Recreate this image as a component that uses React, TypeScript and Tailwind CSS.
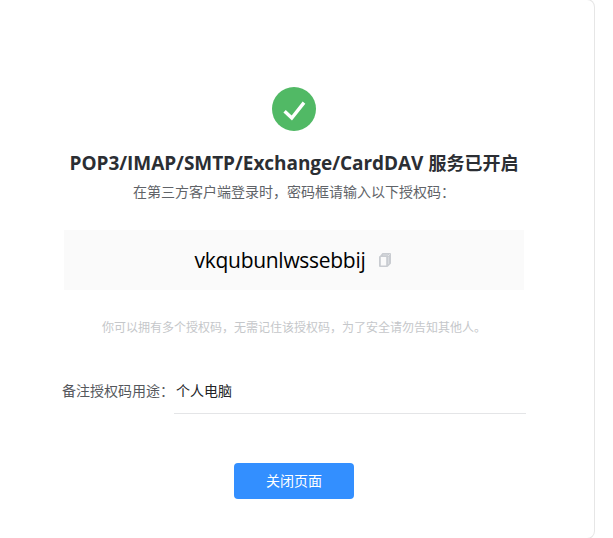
const CJK = "font-['Noto_Sans_CJK_SC',sans-serif]";

function SuccessIcon() {
  return (
    <svg width="44" height="44" viewBox="0 0 44 44" className="block">
      <circle cx="22" cy="22" r="22" fill="#51b965" />
      <path d="M12.6 24.2 L19.8 31 L32 15.6" fill="none" stroke="#fff" strokeWidth="3.4" />
    </svg>
  );
}

function CopyIcon() {
  return (
    <svg width="12" height="14" viewBox="0 0 12 14" className="block">
      <path
        fill="#c9ccd1"
        fillRule="evenodd"
        d="M3.5 0H11a1 1 0 0 1 1 1V10.5L9 13.5a1 1 0 0 1-.7.5H1a1 1 0 0 1-1-1V4a1 1 0 0 1 1-1L3 .4A1 1 0 0 1 3.5 0ZM1.8 4V12.4H7.2V4Z"
      />
      <path d="M9.5 3.8V11M4 2H9" stroke="#dcdee2" strokeWidth="0.8" fill="none" />
      <path d="M9.2 2.8L10.6 1.4" stroke="#f2f3f4" strokeWidth="0.9" fill="none" />
    </svg>
  );
}

export default function App() {
  return (
    <div className={`flex h-[538px] w-[613px] items-center overflow-hidden bg-white ${CJK}`}>
      <main className="flex h-[540px] w-[595px] shrink-0 flex-col rounded-r-lg border-y border-r border-[#e6e6e6] pt-[87px]">
        <div className="flex w-[588px] flex-col items-center">
          <SuccessIcon />
          <h1 className="mt-5 flex h-6 items-center gap-[5px] whitespace-nowrap text-[18px] font-bold leading-6 text-[#2b2e33]">
            <span className="font-['Open_Sans','Noto_Sans',sans-serif] text-[19px] tracking-[-0.05px]">
              POP3/IMAP/SMTP/Exchange/CardDAV
            </span>
            <span className="pb-0.5">服务已开启</span>
          </h1>
          <p className="mt-1.5 whitespace-nowrap text-sm leading-5 text-[#606368]">
            在第三方客户端登录时，密码框请输入以下授权码：
          </p>
          <div className="mt-[29px] flex h-[60px] w-[460px] items-center justify-center gap-[14px] bg-[#fafafa] pr-0.5">
            <span className="font-['Open_Sans','Noto_Sans',sans-serif] text-[21px] leading-7 tracking-[-0.29px] text-black">
              vkqubunlwssebbij
            </span>
            <CopyIcon />
          </div>
          <p className="mt-[27px] whitespace-nowrap text-xs leading-5 text-[#c5c7ca]">
            你可以拥有多个授权码，无需记住该授权码，为了安全请勿告知其他人。
          </p>
          <label className="mt-[33px] flex h-11 w-[464px] text-sm leading-10 text-[#55585d]">
            <span className="w-28 shrink-0 whitespace-nowrap">备注授权码用途：</span>
            <input
              className="h-11 min-w-0 flex-1 border-b border-[#e4e5e7] bg-transparent px-0.5 pb-[3px] text-[#222326] outline-none"
              defaultValue="个人电脑"
            />
          </label>
          <button className="mt-[49px] h-9 w-[120px] rounded bg-[#338fff] pb-0.5 text-sm text-white">关闭页面</button>
        </div>
      </main>
    </div>
  );
}
